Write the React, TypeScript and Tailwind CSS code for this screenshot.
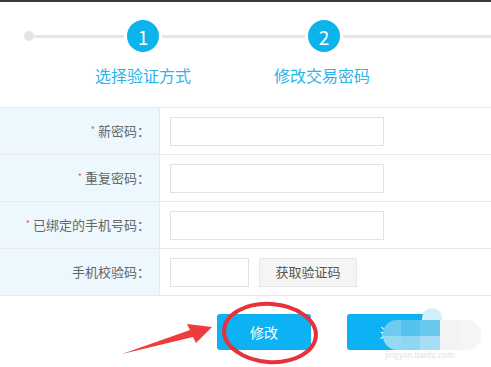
const font = { fontFamily: '"Noto Sans CJK SC", "Noto Sans", sans-serif' };

const rows = [
  { label: '新密码：', required: true },
  { label: '重复密码：', required: true },
  { label: '已绑定的手机号码：', required: true },
];

function Step({ n }: { n: number }) {
  return (
    <div className="w-[38px] h-[38px] rounded-full border-[3px] border-white bg-[#0db4ec] flex items-center justify-center shrink-0">
      <span className="text-white text-[19px] leading-none">{n}</span>
    </div>
  );
}

export default function App() {
  return (
    <div className="relative w-[491px] h-[367px] bg-white overflow-hidden" style={font}>
      <div className="h-[2px] bg-[#3c3c3c]" />

      {/* steps */}
      <div className="flex items-center pl-[24px] mt-[15px]">
        <div className="w-[10px] h-[10px] rounded-full bg-[#e3e3e3] shrink-0" />
        <div className="w-[90px] h-[3px] bg-[#e6e6e6] shrink-0" />
        <Step n={1} />
        <div className="w-[143px] h-[3px] bg-[#e6e6e6] shrink-0" />
        <Step n={2} />
        <div className="flex-1 h-[3px] bg-[#e6e6e6]" />
      </div>
      <div className="flex text-[16px] text-[#2ab5ea] leading-none mt-[12px]">
        <span className="ml-[95px]">选择验证方式</span>
        <span className="ml-[83px]">修改交易密码</span>
      </div>

      {/* form table */}
      <div className="mt-[24px] border-t border-[#e9e9e9] text-[13px] text-[#666]">
        {rows.map((r) => (
          <div key={r.label} className="flex h-[47px] border-b border-[#e9e9e9]">
            <div className="w-[160px] shrink-0 bg-[#edf7fe] border-r border-[#e9e9e9] flex items-center justify-end pr-[9px]">
              {r.required && <span className="text-[#f0506e] text-[9px] mr-[3px] -mt-[3px]">*</span>}
              <span>{r.label}</span>
            </div>
            <div className="flex items-center pl-[10px]">
              <div className="w-[214px] h-[29px] border border-[#e2e2e2] bg-white" />
            </div>
          </div>
        ))}
        <div className="flex h-[47px] border-b border-[#e9e9e9]">
          <div className="w-[160px] shrink-0 bg-[#edf7fe] border-r border-[#e9e9e9] flex items-center justify-end pr-[9px]">
            <span>手机校验码：</span>
          </div>
          <div className="flex items-center pl-[10px] gap-[10px]">
            <div className="w-[79px] h-[29px] border border-[#e2e2e2] bg-white" />
            <button className="w-[98px] h-[29px] border border-[#e6e6e6] bg-[#f5f5f5] text-[13px] text-[#555]">获取验证码</button>
          </div>
        </div>
      </div>

      {/* buttons */}
      <div className="flex gap-[36px] pl-[217px] mt-[18px]">
        <button className="w-[94px] h-[36px] rounded-[3px] bg-[#0cb2f3] text-white text-[14px]">修改</button>
        <button className="w-[94px] h-[36px] rounded-[3px] bg-[#0cb2f3] text-white text-[14px]">返回</button>
      </div>

      {/* watermark blob */}
      <div className="absolute left-[422px] top-[308px] w-[20px] h-[16px] rounded-t-full bg-[#d3eefb]" />
      <div className="absolute left-[383px] top-[320px] w-[98px] h-[30px] rounded-[14px] overflow-hidden flex">
        <div className="w-[18px] flex flex-col"><div className="flex-1 bg-[#6fcaf1]" /><div className="h-[14px] bg-[#96d9f5]" /></div>
        <div className="w-[19px] flex flex-col"><div className="flex-1 bg-[#55c1ee]" /><div className="h-[14px] bg-[#8fd6f4]" /></div>
        <div className="w-[20px] flex flex-col"><div className="flex-1 bg-[#68c9ef]" /><div className="h-[14px] bg-[#a6def6]" /></div>
        <div className="w-[20px] bg-[#f1f3f4]" />
        <div className="flex-1 bg-[#f5f5f5]" />
      </div>
      <span className="absolute left-[385px] top-[351px] text-[8px] leading-none text-[#e2e2e2]">jingyan.baidu.com</span>

      {/* annotations */}
      <svg className="absolute left-0 top-0 pointer-events-none" width="491" height="367">
        <polygon points="122,354 190,330 187,324 212,327 196,343 193,337" fill="#ee3b3b" />
        <ellipse cx="270" cy="333" rx="46" ry="29" fill="none" stroke="#e8323a" strokeWidth="4" transform="rotate(4 270 333)" />
      </svg>
    </div>
  );
}
